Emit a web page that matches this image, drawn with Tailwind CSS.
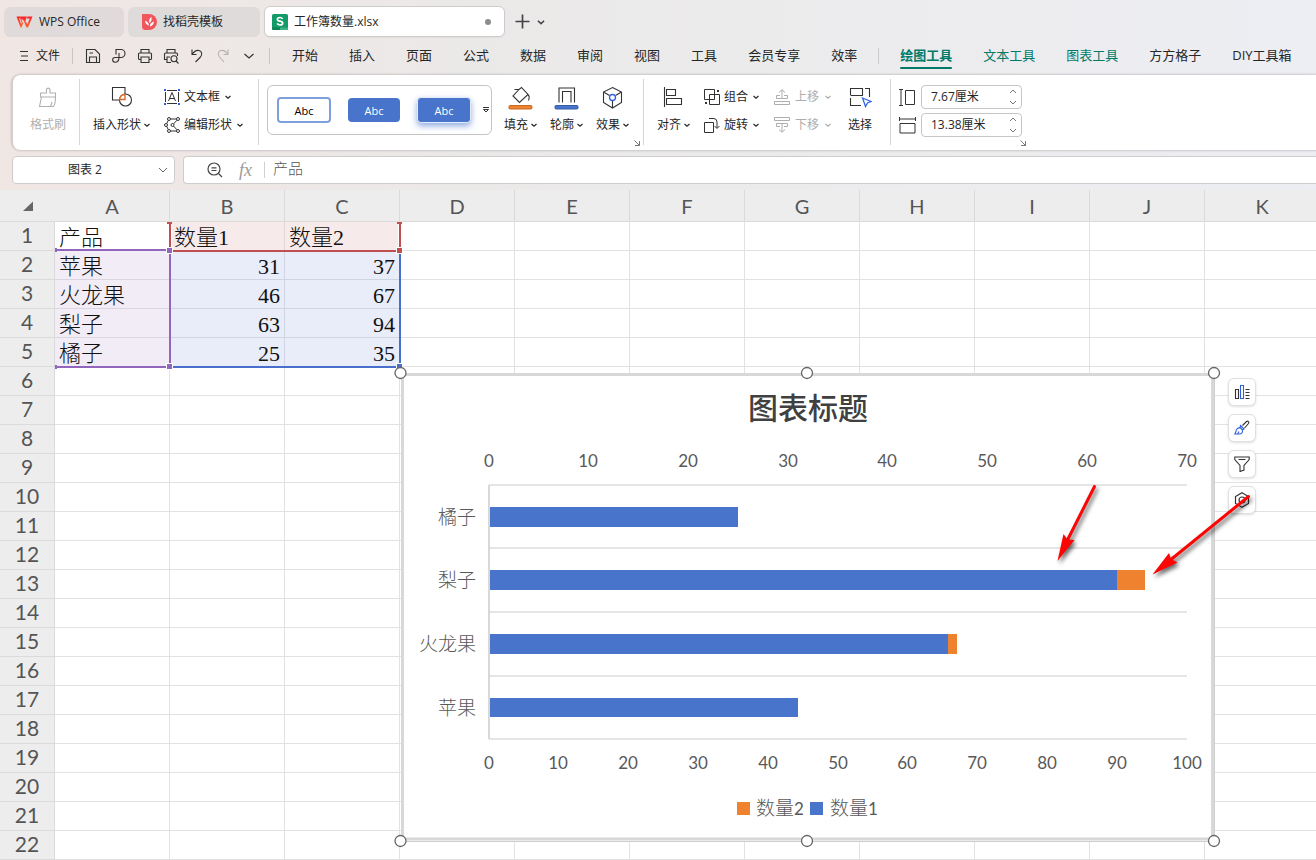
<!DOCTYPE html>
<html lang="zh-CN">
<head>
<meta charset="utf-8">
<title>工作簿数量.xlsx - WPS Office</title>
<script src="https://cdn.jsdelivr.net/npm/@tailwindcss/browser@4"></script>
</head>
<body class="h-screen flex flex-col overflow-hidden bg-[#ededed] text-[#262626] text-xs font-['Open_Sans','Noto_Sans_CJK_SC',sans-serif]">
<svg class="hidden">
  <symbol id="chev" viewBox="0 0 8 8"><path d="M1.500 3 4 5.300 6.500 3" fill="none" stroke="currentColor" stroke-width="1.200"/></symbol>
  <symbol id="launch" viewBox="0 0 8 8"><path d="M1.500 1.500 6.500 6.500M6.500 2V6.500H2" fill="none" stroke="#777"/></symbol>
</svg>

<header class="shrink-0 bg-linear-to-r from-[#f0e6e4] via-[#ebe9e8] via-35% to-[#edeef3]">
  <!-- Document tabs -->
  <div class="flex items-center gap-1 pt-1.5 pl-1 h-[37px]">
    <button class="flex items-center gap-1.5 w-[120px] h-[30px] pl-3 rounded-md bg-[#e0dbda]">
      <svg class="w-[17px] h-3" viewBox="0 0 16 12"><defs><linearGradient id="wps" x2="0" y2="1"><stop stop-color="#f5222d"/><stop offset="1" stop-color="#ff6a2a"/></linearGradient></defs><path d="M0 .5H10.500L8 7 6.500 3.500H4.700L6.500 7.500 5 11.500H4zM11 .5H16L11.500 11.500H10L8.200 7.500 9.200 5 10.800 8.500 13.200 2.500H10.200z" fill="url(#wps)"/><path d="M2.500 2 4.700 8.200 5.300 7 3.500 2z" fill="#fbd5cf"/></svg>
      <span>WPS Office</span>
    </button>
    <button class="flex items-center gap-1.5 w-[132px] h-[30px] pl-3.5 rounded-md bg-[#dedbda]">
      <svg class="w-[15px] h-4" viewBox="0 0 15 16"><path d="M0 0H7A8 8 0 0 1 7 16H2.500A2.500 2.500 0 0 1 0 13.500z" fill="#f0575c"/><path d="M0 13.500V16H2.500z" fill="#f8a5a5"/><path d="M3 7C5 7 6.500 8.500 7 11.500 5 11 3.300 9.500 3 7zM7.500 9C6.500 6.500 7.500 4 9.500 3 9.800 5.500 9.500 7.500 7.500 9zM8 12.500C8 10 9 8.500 11.800 7.500 11.800 10 10.500 12 8 12.500z" fill="#fff"/></svg>
      <span>找稻壳模板</span>
    </button>
    <button class="flex items-center gap-1.5 w-[241px] h-[31px] pl-[7px] pr-2 rounded-md bg-white border border-[#cfcdcc] shadow-xs">
      <svg class="w-4 h-4 shrink-0" viewBox="0 0 16 16"><rect width="16" height="16" rx="1.500" fill="#129a68"/><path d="M0 13.500H16V14.500A1.500 1.500 0 0 1 14.500 16H1.500A1.500 1.500 0 0 1 0 14.500z" fill="#0b8457"/><path d="M8 13.500H16V14.500A1.500 1.500 0 0 1 14.500 16H8z" fill="#3eb387"/><path d="M10.600 4.900C10 3.900 9 3.500 8 3.500 6.500 3.500 5.400 4.200 5.400 5.400 5.400 8 10.700 6.400 10.700 9 10.700 10.300 9.500 11 8 11 6.800 11 5.700 10.500 5.200 9.400" fill="none" stroke="#fff" stroke-width="1.700"/></svg>
      <span class="grow text-left">工作簿数量.xlsx</span>
      <span class="w-1.5 h-1.5 mr-[5px] rounded-full bg-[#8c8c8c]"></span>
    </button>
    <button class="ml-1.5" aria-label="新建"><svg class="w-[15px] h-[15px]" viewBox="0 0 15 15"><path d="M7.500 .5V14.500M.5 7.500H14.500" stroke="#444" stroke-width="1.700"/></svg></button>
    <button aria-label="标签列表" class="ml-0.5"><svg class="w-2.5 h-2.5 text-[#444]"><use href="#chev"/></svg></button>
  </div>

  <!-- Quick access and menu -->
  <div class="flex items-center h-[38px] pl-[18px] whitespace-nowrap text-[13px]">
    <button class="flex items-center gap-1.5 w-[54px] text-xs">
      <svg class="w-3 h-3 shrink-0" viewBox="0 0 12 12"><path d="M2 1.500H10M3 6H10M2 10.500H10" stroke="#333"/></svg>文件
    </button>
    <span class="w-px h-4 bg-[#c9c5c4]"></span>
    <div class="flex items-center gap-2.5 ml-3 text-[#333]">
      <button aria-label="保存"><svg class="w-4 h-4 block" viewBox="0 0 16 16" fill="none" stroke="currentColor" stroke-width="1.100"><path d="M1.500 1.500H10L14.500 6V14.500H1.500zM4.500 14.500V9H11.500V14.500M4.500 5H8"/></svg></button>
      <button aria-label="输出为PDF"><svg class="w-4 h-4 block" viewBox="0 0 16 16" fill="none" stroke="currentColor" stroke-width="1.100"><path d="M5 6.500V1.500H10A4 4 0 0 1 10 9.500H4A2.300 2.300 0 0 0 4 14.200C6.500 14.200 8 12.500 8 9.500V5"/></svg></button>
      <button aria-label="打印"><svg class="w-4 h-4 block" viewBox="0 0 16 16" fill="none" stroke="currentColor" stroke-width="1.100"><path d="M4 5V1.500H12V5M4 11.500H2.500A1 1 0 0 1 1.500 10.500V6A1 1 0 0 1 2.500 5H13.500A1 1 0 0 1 14.500 6V10.500A1 1 0 0 1 13.500 11.500H12M4 9H12V14.500H4z"/></svg></button>
      <button aria-label="打印预览"><svg class="w-4 h-4 block" viewBox="0 0 16 16" fill="none" stroke="currentColor" stroke-width="1.100"><path d="M4 5V1.500H12V5M4 11.500H1.500V6A1 1 0 0 1 2.500 5H13.500A1 1 0 0 1 14.500 6V8M7 9H4V14.500H8M13 13 15.500 15.500"/><circle cx="11" cy="10.800" r="3"/></svg></button>
      <button aria-label="撤销"><svg class="w-4 h-4 block" viewBox="0 0 16 16" fill="none" stroke="currentColor" stroke-width="1.100"><path d="M3 1.500V6.500H7.500M3 6.500C5 3.500 7.500 2 10 2.500 13 3.200 13.500 6.800 11.500 9L6.500 14"/></svg></button>
      <button aria-label="恢复" class="text-[#b5b2b1]"><svg class="w-4 h-4 block" viewBox="0 0 16 16" fill="none" stroke="currentColor" stroke-width="1.100"><path d="M13 1.500V6.500H8.500M13 6.500C11 3.500 8.500 2 6 2.500 3 3.200 2.500 6.800 4.500 9L9 14"/></svg></button>
      <button aria-label="更多"><svg class="w-4 h-4 block" viewBox="0 0 16 16" fill="none" stroke="currentColor" stroke-width="1.200"><path d="M3.500 6 8 10 12.500 6"/></svg></button>
    </div>
    <span class="w-px h-4 ml-3 bg-[#c9c7c6]"></span>
    <nav class="flex items-center gap-[31px] ml-[22px]">
      <a href="#">开始</a><a href="#">插入</a><a href="#">页面</a><a href="#">公式</a><a href="#">数据</a><a href="#">审阅</a><a href="#">视图</a><a href="#">工具</a><a href="#">会员专享</a><a href="#">效率</a>
      <span class="w-px h-4 -mx-2.5 bg-[#cacace]"></span>
      <a href="#" class="relative font-bold text-[#007a68] after:absolute after:inset-x-0 after:-bottom-1 after:h-0.5 after:rounded-full after:bg-[#007a68]">绘图工具</a>
      <a href="#" class="text-[#007a68]">文本工具</a><a href="#" class="text-[#007a68]">图表工具</a><a href="#">方方格子</a><a href="#">DIY工具箱</a>
    </nav>
  </div>

  <!-- Ribbon -->
  <div class="flex items-start ml-3 h-[75px] pt-1 bg-white rounded-l-lg border-l border-[#d2cecd] shadow-[0_0_2px_1px_#00000026] whitespace-nowrap">
    <div class="w-[67px] h-[66px] shrink-0 border-r border-[#d6d6d6] pt-1 pl-1 text-[#b0b0b0]">
      <button class="w-full flex flex-col items-center">
        <span class="h-7 flex items-center"><svg class="w-5 h-[22px]" viewBox="0 0 20 22" fill="none" stroke="currentColor" stroke-width="1.100"><path d="M8.500 7V3.500A1.800 1.800 0 0 1 12 3.500V7H17.500V11H2.500V7zM3.500 11 1.500 20.500H15.500C17 18.500 17.500 15 17.500 11M12.500 20.500 14 16"/></svg></span>
        <span class="h-7 leading-7">格式刷</span>
      </button>
    </div>
    <div class="w-[179px] h-[66px] shrink-0 border-r border-[#d6d6d6] pt-1 pl-[13px] flex">
      <button class="flex flex-col items-center w-[58px]">
        <span class="h-7 flex items-center"><svg class="w-[22px] h-[22px]" viewBox="0 0 22 22" fill="none" stroke="#333" stroke-width="1.100"><path d="M8 14H1.500V1.500H14V8"/><circle cx="14.500" cy="14" r="6" /><path d="M8.500 13.500C9 10.500 11 8.500 14 8.500V13.500z" fill="#fff" stroke="#e0682c" stroke-width="1.400"/></svg></span>
        <span class="h-7 flex items-center gap-0.5">插入形状<svg class="w-2 h-2"><use href="#chev"/></svg></span>
      </button>
      <div class="ml-[13px]">
        <button class="h-7 flex items-center gap-1"><svg class="w-4 h-4" viewBox="0 0 16 16" fill="none" stroke="#333"><path d="M3 1.500H13M3 14.500H13M1.500 3V13M14.500 3V13M4.500 12 8 3.500 11.500 12M5.700 9.500H10.300"/><path d="M0 0h2v2H0zM14 0H16v2h-2zM0 14h2V16H0zM14 14H16V16h-2z" fill="#2f5fe0" stroke="none"/></svg>文本框<svg class="w-2 h-2"><use href="#chev"/></svg></button>
        <button class="h-7 flex items-center gap-1"><svg class="w-4 h-4" viewBox="0 0 16 16" fill="none" stroke="#333"><circle cx="5" cy="2" r="1.500"/><circle cx="14" cy="2" r="1.500"/><circle cx="2" cy="8" r="1.500"/><circle cx="8.500" cy="8" r="1.500"/><circle cx="5" cy="14" r="1.500"/><circle cx="14" cy="14" r="1.500"/><path d="M6.500 2H12.500M6.500 14H12.500M4.200 3.400 2.800 6.600M2.800 9.400 4.200 12.600M13 3.200 9.600 6.900M9.600 9.100 13 12.800"/></svg>编辑形状<svg class="w-2 h-2"><use href="#chev"/></svg></button>
      </div>
    </div>
    <div class="relative w-[385px] h-[66px] shrink-0 border-r border-[#d6d6d6] pl-2 flex">
      <div class="flex items-center mt-1.5 pl-[9px] w-[225px] h-[50px] rounded-md border border-[#c4c4c4] text-[11px] leading-none">
        <button class="w-[54px] h-[26px] rounded border-2 border-[#7f9fdc] text-black">Abc</button>
        <button class="ml-[17px] w-[52px] h-6 rounded bg-[#4874cb] text-white">Abc</button>
        <button class="ml-[17px] w-[54px] h-[26px] rounded border border-[#e3eafa] bg-[#4874cb] text-white shadow-[0_3px_6px_#4874cb99]">Abc</button>
        <button class="ml-[11px]" aria-label="更多样式"><svg class="w-2 h-2 block" viewBox="0 0 8 8" fill="none" stroke="#333"><path d="M1 1.500H7M1.500 3.500H6.500L4 6z"/></svg></button>
      </div>
      <div class="flex gap-3 pt-1 ml-3">
        <button class="flex flex-col"><span class="h-7 flex items-center pl-1"><svg class="w-[25px] h-[25px]" viewBox="0 0 25 25" fill="none" stroke="#333" stroke-width="1.100"><path d="M6.500 4.500H11L13.500 2.500 20 9.500 11.500 17.500 5 11 11 4.500M20 9.500C21.500 11 21.500 13 20.500 15.500"/><rect x="1" y="20.500" width="23" height="3.500" rx="1.500" fill="#ee822f" stroke="#c86a22"/></svg></span><span class="h-7 flex items-center gap-0.5">填充<svg class="w-2 h-2"><use href="#chev"/></svg></span></button>
        <button class="flex flex-col"><span class="h-7 flex items-center pl-1"><svg class="w-[25px] h-[25px]" viewBox="0 0 25 25" fill="none" stroke="#333" stroke-width="1.100"><path d="M5 17.500V3H20.500V17.500M8.500 17.500V6.500H17V17.500"/><rect x="1" y="20.500" width="23" height="3.500" rx="1.500" fill="#4874cb" stroke="#355ba8"/></svg></span><span class="h-7 flex items-center gap-0.5">轮廓<svg class="w-2 h-2"><use href="#chev"/></svg></span></button>
        <button class="flex flex-col"><span class="h-7 flex items-center pl-1"><svg class="w-[25px] h-[25px]" viewBox="0 0 25 25" fill="none" stroke="#333" stroke-width="1.100"><path d="M12.500 2.500 21.500 7V17.500L12.500 23 3.500 17.500V7zM3.500 7 9.500 10.500M21.500 7 15.500 10.500M12.500 16V23"/><circle cx="12.500" cy="12.500" r="3" stroke="#2f62e6" stroke-width="1.300"/></svg></span><span class="h-7 flex items-center gap-0.5">效果<svg class="w-2 h-2"><use href="#chev"/></svg></span></button>
      </div>
      <button class="absolute right-0.5 -bottom-0.5" aria-label="形状样式设置"><svg class="w-2 h-2 block"><use href="#launch"/></svg></button>
    </div>
    <div class="w-[247px] h-[66px] shrink-0 border-r border-[#d6d6d6] pt-1 pl-[13px] flex">
      <button class="flex flex-col w-[36px]"><span class="h-7 flex items-center pl-1.5"><svg class="w-5 h-[22px]" viewBox="0 0 20 22" fill="none" stroke="#333" stroke-width="1.100"><path d="M1.500 1V21M3.500 3.500H12.500V9.500H3.500zM3.500 12.500H18.500V18.500H3.500z"/></svg></span><span class="h-7 flex items-center gap-0.5">对齐<svg class="w-2 h-2"><use href="#chev"/></svg></span></button>
      <div class="ml-[11px] w-[70px]">
        <button class="h-7 flex items-center gap-1"><svg class="w-4 h-4" viewBox="0 0 16 16" fill="none" stroke="#333"><path d="M.5 .5H10.500V10.500H.5zM5.500 5.500H15.500V15.500H5.500z"/><path d="M13 1h2v2h-2zM1 13h2v2H1z" fill="#333" stroke="none"/></svg>组合<svg class="w-2 h-2"><use href="#chev"/></svg></button>
        <button class="h-7 flex items-center gap-1"><svg class="w-4 h-4" viewBox="0 0 16 16" fill="none" stroke="#333"><path d="M.5 5.500H9.500V15.500H.5zM5 1.500H10A3.500 3.500 0 0 1 13 5V11M10.500 9 13 11.500 15.500 9"/></svg>旋转<svg class="w-2 h-2"><use href="#chev"/></svg></button>
      </div>
      <div class="w-[74px] text-[#adadad]">
        <button class="h-7 flex items-center gap-[5px]"><svg class="w-4 h-4" viewBox="0 0 16 16" fill="none" stroke="currentColor"><path d="M8 9.500V.8M5 3.500 8 .8 11 3.500M6 6.500H2.500V9.500H13.500V6.500H10M.5 12.500H15.500V15.500H.5z"/></svg>上移<svg class="w-2 h-2"><use href="#chev"/></svg></button>
        <button class="h-7 flex items-center gap-[5px]"><svg class="w-4 h-4" viewBox="0 0 16 16" fill="none" stroke="currentColor"><path d="M8 6.500V15.200M5 12.500 8 15.200 11 12.500M6 9.500H2.500V6.500H13.500V9.500H10M.5 .5H15.500V3.500H.5z"/></svg>下移<svg class="w-2 h-2"><use href="#chev"/></svg></button>
      </div>
      <button class="flex flex-col items-center"><span class="h-7 flex items-center"><svg class="w-6 h-[22px]" viewBox="0 0 24 22" fill="none" stroke="#333" stroke-width="1.100"><path d="M2.500 9V2.500H14.500V9.500H2.500M17 2.500H21.500V11M2.500 12V19.500H13"/><path d="M14.500 12 23 15.500 19.500 17 17.500 20.500z" stroke="#2f62e6" stroke-width="1.300"/></svg></span><span class="h-7 leading-7">选择</span></button>
    </div>
    <div class="relative w-[138px] h-[66px] pt-1 pl-2">
      <label class="h-7 flex items-center gap-[5px]">
        <svg class="w-[17px] h-[17px]" viewBox="0 0 17 17" fill="none" stroke="#333"><path d="M0 .5H4M0 16.500H4M2 .5V16.500M6.500 1.500H15.500V15.500H6.500z"/></svg>
        <span class="flex items-center w-[101px] h-6 rounded border border-[#c6c6c6] pl-[9px] pr-1">
          <input aria-label="高度" value="7.67厘米" class="w-0 grow outline-none bg-transparent">
          <svg class="w-2 h-4" viewBox="0 0 8 16" fill="none" stroke="#777"><path d="M1 4 4 1 7 4M1 12 4 15 7 12"/></svg>
        </span>
      </label>
      <label class="h-7 flex items-center gap-[5px]">
        <svg class="w-[17px] h-[17px]" viewBox="0 0 17 17" fill="none" stroke="#333"><path d="M.5 0V4M16.500 0V4M.5 2H16.500M1 6.500H16V16H1z"/></svg>
        <span class="flex items-center w-[101px] h-6 rounded border border-[#c6c6c6] pl-[9px] pr-1">
          <input aria-label="宽度" value="13.38厘米" class="w-0 grow outline-none bg-transparent">
          <svg class="w-2 h-4" viewBox="0 0 8 16" fill="none" stroke="#777"><path d="M1 4 4 1 7 4M1 12 4 15 7 12"/></svg>
        </span>
      </label>
      <button class="absolute right-0.5 -bottom-0.5" aria-label="大小设置"><svg class="w-2 h-2 block"><use href="#launch"/></svg></button>
    </div>
  </div>

  <!-- Name box and formula bar -->
  <div class="flex gap-2 pt-1.5 pb-1.5 pl-3 h-10">
    <div class="flex items-center w-[163px] shrink-0 h-7 pr-[5px] rounded bg-white border border-[#d0cccb]">
      <input aria-label="名称框" value="图表 2" class="w-0 grow text-center outline-none bg-transparent">
      <svg class="w-3 h-3" viewBox="0 0 12 12" fill="none" stroke="#666"><path d="M2 4 6 8 10 4"/></svg>
    </div>
    <div class="flex items-center grow h-7 pl-[23px] rounded-l bg-white border border-r-0 border-[#d0cccb]">
      <svg class="w-4 h-4" viewBox="0 0 16 16" fill="none" stroke="#444" stroke-width="1.200"><circle cx="7" cy="7" r="6"/><path d="M11.500 11.500 15 15M4.500 5.800H9.500M4.500 8.500H9.500"/></svg>
      <span class="ml-4 italic text-lg leading-none text-[#999] font-['Liberation_Serif',serif]">fx</span>
      <span class="w-px h-4 ml-3 bg-[#d0d0d0]"></span>
      <input aria-label="编辑栏" value="产品" class="grow pl-2 pb-1 text-[15px] font-light text-[#555] outline-none bg-transparent">
    </div>
  </div>
</header>

<main class="relative grow overflow-hidden bg-white">
  <table class="table-fixed w-[1320px] border-separate border-spacing-0 text-[22px] leading-none text-[#111] font-['Liberation_Serif','Noto_Sans_CJK_SC',serif]">
    <colgroup><col class="w-[55px]"><col span="11" class="w-[115px]"></colgroup>
    <thead class="bg-[#ededed] text-xl leading-none text-[#555] font-['Lato',sans-serif]"><tr id="letters"></tr></thead>
    <tbody id="rows"></tbody>
  </table>

  <!-- Coloured outlines of the chart's source ranges -->
  <svg class="absolute left-0 top-0 w-[410px] h-[190px]" viewBox="0 190 410 190">
    <path d="M170 223V250M400 223V250" stroke="#fff" stroke-width="4"/>
    <path d="M170 224V249M400 224V249M172 251H398" stroke="#c24f50" stroke-width="2"/>
    <path d="M167 222h5v2h-5zM397 222h5v2h-5z" fill="#c24f50"/>
    <path d="M57 250H167M170 253V364M57 367H167" stroke="#9366bd" stroke-width="2"/>
    <path d="M55 248h2v4h-2zM55 365h2v4h-2z" fill="#9366bd"/>
    <path d="M172 367H397M400 253V365" stroke="#476fcb" stroke-width="2"/>
    <g stroke="#fff"><rect x="166.500" y="247.500" width="6" height="6" fill="#9366bd"/><rect x="166.500" y="363.500" width="6" height="6" fill="#9366bd"/><rect x="396.500" y="247.500" width="6" height="6" fill="#c24f50"/><rect x="396.500" y="363.500" width="6" height="6" fill="#476fcb"/></g>
  </svg>

  <svg class="absolute left-[392px] top-[174px] w-[832px] h-[496px] font-['Lato','Noto_Sans_CJK_SC',sans-serif]" viewBox="392 364 832 496" role="img" aria-label="图表标题">
    <path d="M401 373.500H1214.500V841.500H401z" fill="#fff"/>
    <path d="M1214.500 373V841.500H401" fill="none" stroke="#cfcfcf"/>
    <path d="M402.500 374.500H1212.500V839H402.500z" fill="#fff" stroke="#d8d8d8" stroke-width="3"/>
    <text x="808" y="419" text-anchor="middle" font-size="30" font-weight="500" fill="#404040">图表标题</text>
    <path d="M489 485H1187M489 548H1187M489 612H1187M489 676H1187M489 739H1187" stroke="#e5e5e5" stroke-width="2"/>
    <path d="M489 485V739" stroke="#d8d8d8" stroke-width="2"/>
    <g fill="#4874cb"><path d="M490 507H738V527H490zM490 570H1117V590H490zM490 634H948V654H490zM490 698H798V717H490z"/></g>
    <path d="M1117 570H1145V590H1117zM948 634H957V654H948z" fill="#ee822f"/>
    <g font-size="17" fill="#595959" text-anchor="middle">
      <text x="489" y="467">0</text><text x="588" y="467">10</text><text x="688" y="467">20</text><text x="788" y="467">30</text><text x="887" y="467">40</text><text x="987" y="467">50</text><text x="1087" y="467">60</text><text x="1187" y="467">70</text>
      <text x="489" y="769">0</text><text x="558" y="769">10</text><text x="628" y="769">20</text><text x="698" y="769">30</text><text x="768" y="769">40</text><text x="838" y="769">50</text><text x="907" y="769">60</text><text x="977" y="769">70</text><text x="1047" y="769">80</text><text x="1117" y="769">90</text><text x="1187" y="769">100</text>
    </g>
    <g font-size="19" font-weight="300" fill="#595959" text-anchor="end">
      <text x="476" y="524">橘子</text><text x="476" y="587">梨子</text><text x="476" y="651">火龙果</text><text x="476" y="715">苹果</text>
    </g>
    <path d="M737 802h13v13h-13z" fill="#ee822f"/><path d="M810 802h13v13h-13z" fill="#4874cb"/>
    <g font-size="19" font-weight="300" fill="#595959"><text x="756" y="815">数量<tspan font-size="17" font-weight="400">2</tspan></text><text x="830" y="815">数量<tspan font-size="17" font-weight="400">1</tspan></text></g>
    <g fill="#fff" stroke="#666" stroke-width="1.300"><circle cx="400.500" cy="373" r="5.500"/><circle cx="807" cy="373" r="5.500"/><circle cx="1214" cy="373" r="5.500"/><circle cx="400.500" cy="841" r="5.500"/><circle cx="807" cy="841" r="5.500"/><circle cx="1214" cy="841" r="5.500"/></g>
  </svg>

  <div class="absolute left-[1228px] top-[188px] flex flex-col gap-2">
    <button aria-label="图表元素" class="w-7 h-7 flex items-center justify-center rounded-md bg-white border border-[#e0e0e0] shadow"><svg class="w-4 h-4" viewBox="0 0 16 16" fill="none" stroke="#333" stroke-width="1.100"><path d="M1.500 5.500H4.500V14.500H1.500zM11.500 5.500H15.500M11.500 8.500H15.500M11.500 11.500H15.500M11.500 14.500H15.500"/><path d="M6.500 1.500H9.500V14.500H6.500z" stroke="#2f5fe0"/></svg></button>
    <button aria-label="图表样式" class="w-7 h-7 flex items-center justify-center rounded-md bg-white border border-[#e0e0e0] shadow"><svg class="w-4 h-4" viewBox="0 0 16 16" fill="none" stroke="#333" stroke-width="1.100"><path d="M8.500 5.500 12.500 1.500C14 .5 15.500 2 14.500 3.500L10.500 8"/><path d="M6.500 5.500 10 9 8.500 10 6 7.500zM6 8C4 7.500 2 9 2 11.500L.8 14H6C8.500 13.500 9 11.500 8 10M3.500 14 5 11.500" stroke="#2f5fe0"/></svg></button>
    <button aria-label="图表筛选器" class="w-7 h-7 flex items-center justify-center rounded-md bg-white border border-[#e0e0e0] shadow"><svg class="w-4 h-4" viewBox="0 0 16 16" fill="none" stroke="#333" stroke-width="1.100"><path d="M.8 1H15.200V3.500L10 9.500V14L6 15.500V9.500L.8 3.500zM4.500 3.500H11.500"/></svg></button>
    <button aria-label="设置图表区域格式" class="w-7 h-7 flex items-center justify-center rounded-md bg-white border border-[#e0e0e0] shadow"><svg class="w-4 h-4" viewBox="0 0 16 16" fill="none" stroke="#333" stroke-width="1.200"><path d="M8 .8 14.500 4.500V11.500L8 15.200 1.500 11.500V4.500z"/><circle cx="8" cy="8" r="3"/></svg></button>
  </div>

  <!-- Annotation arrows -->
  <svg class="absolute left-[1040px] top-[290px] w-[230px] h-[110px] pointer-events-none drop-shadow-[2px_3px_2px_#00000099]" viewBox="1040 480 230 110" fill="#fb0505">
    <path d="M1094.500 486.500 1067 541" stroke="#fb0505" stroke-width="3" stroke-linecap="round"/>
    <path d="M1057.500 561 1063.500 534 1067.500 539.500 1074.500 540z"/>
    <path d="M1248.500 496.500 1171 559.500" stroke="#fb0505" stroke-width="3" stroke-linecap="round"/>
    <path d="M1152.500 574.500 1169 553 1171 559 1177.500 562.500z"/>
  </svg>
</main>

<script>
  const data = [['产品', '数量1', '数量2'], ['苹果', 31, 37], ['火龙果', 46, 67], ['梨子', 63, 94], ['橘子', 25, 35]];
  document.getElementById('letters').innerHTML =
    '<th class="h-8 border-b border-[#dcdcdc]"><svg class="w-2.5 h-2.5 mx-auto" viewBox="0 0 10 10"><path d="M10 .5V10H0z" fill="#666"/></svg></th>' +
    [...'ABCDEFGHIJK'].map(c => `<th scope="col" class="h-8 font-normal border-r border-b border-[#dadada]">${c}</th>`).join('');
  let html = '';
  for (let r = 0; r < 22; r++) {
    html += `<tr><th scope="row" class="h-[29px] pb-1 bg-[#ededed] font-normal text-[21px] leading-none text-[#555] font-['Lato',sans-serif] border-r border-b border-[#dadada]">${r + 1}</th>`;
    for (let c = 0; c < 11; c++) {
      const v = data[r]?.[c] ?? '';
      let fill = 'border-[#e2e2e2]';
      if (v !== '' && r === 0 && c > 0) fill = 'bg-[#f7eaea] border-[#e2d6d8]';
      if (v !== '' && r > 0) fill = c ? 'bg-[#e8edf9] border-[#d0d5e4]' : 'bg-[#f2ecf7] border-[#dbd5e2]';
      const align = typeof v === 'number' ? 'text-right pr-1' : 'text-left pl-1';
      html += `<td class="h-[29px] pt-1 font-light border-r border-b ${fill} ${align}">${v}</td>`;
    }
    html += '</tr>';
  }
  document.getElementById('rows').innerHTML = html;
</script>
</body>
</html>
